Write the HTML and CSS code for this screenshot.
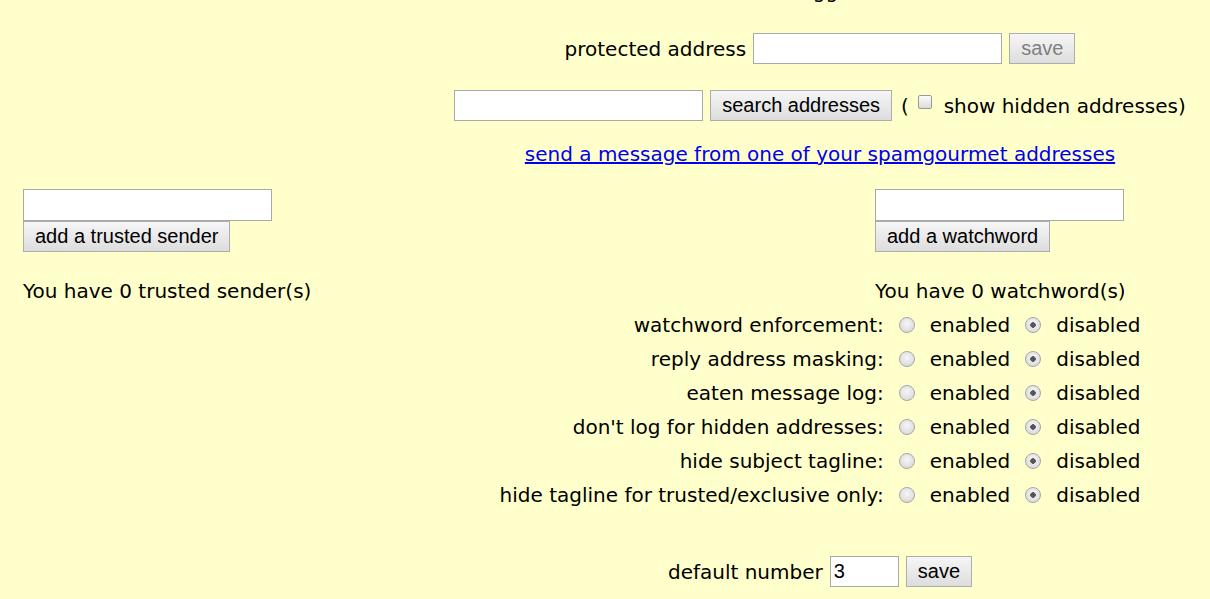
FILE: index.html
```html
<!DOCTYPE html>
<html lang="en">
<head>
  <meta charset="UTF-8" />
  <title>spamgourmet</title>
  <link rel="stylesheet" href="styles.css">
</head>
<body>
  <div class="panel">
    <p class="greeting">logged</p>

    <form class="row">
      <label for="protected">protected address</label>
      <input type="text" id="protected" class="field">
      <button type="button" disabled>save</button>
    </form>

    <form class="row search">
      <input type="text" class="field">
      <button type="button">search addresses</button>
      <span class="hidden-opt">( <input type="checkbox" class="check"> show hidden addresses)</span>
    </form>

    <p class="send"><a href="#">send a message from one of your spamgourmet addresses</a></p>
  </div>

  <div class="lists">
    <div class="list">
      <input type="text" class="field">
      <button type="button">add a trusted sender</button>
      <p class="count">You have 0 trusted sender(s)</p>
    </div>
    <div class="list">
      <input type="text" class="field">
      <button type="button">add a watchword</button>
      <p class="count">You have 0 watchword(s)</p>
    </div>
  </div>

  <div class="panel">
    <table class="prefs">
      <tr>
        <td class="name">watchword enforcement:</td>
        <td><div class="opts"><input type="radio" name="p1" class="radio">enabled<input type="radio" name="p1" class="radio" checked>disabled</div></td>
      </tr>
      <tr>
        <td class="name">reply address masking:</td>
        <td><div class="opts"><input type="radio" name="p2" class="radio">enabled<input type="radio" name="p2" class="radio" checked>disabled</div></td>
      </tr>
      <tr>
        <td class="name">eaten message log:</td>
        <td><div class="opts"><input type="radio" name="p3" class="radio">enabled<input type="radio" name="p3" class="radio" checked>disabled</div></td>
      </tr>
      <tr>
        <td class="name">don't log for hidden addresses:</td>
        <td><div class="opts"><input type="radio" name="p4" class="radio">enabled<input type="radio" name="p4" class="radio" checked>disabled</div></td>
      </tr>
      <tr>
        <td class="name">hide subject tagline:</td>
        <td><div class="opts"><input type="radio" name="p5" class="radio">enabled<input type="radio" name="p5" class="radio" checked>disabled</div></td>
      </tr>
      <tr>
        <td class="name">hide tagline for trusted/exclusive only:</td>
        <td><div class="opts"><input type="radio" name="p6" class="radio">enabled<input type="radio" name="p6" class="radio" checked>disabled</div></td>
      </tr>
    </table>

    <form class="row default">
      <label for="defnum">default number</label>
      <input type="text" id="defnum" class="field small" value="3">
      <button type="button">save</button>
    </form>
  </div>
</body>
</html>
```

FILE: styles.css
```css
body {
  margin: 0;
  background: #ffffcc;
  color: #000;
  font-family: "DejaVu Sans", Verdana, sans-serif;
  font-size: 20px;
}

p {
  margin: 0;
}

.panel {
  margin-left: 430px;
  width: 780px;
  text-align: center;
}

.greeting {
  margin-top: -21px;
  padding-left: 18px;
  line-height: 24px;
}

.row {
  display: flex;
  align-items: center;
  justify-content: center;
  gap: 7px;
  margin: 30px 0 0;
}

.row.search {
  margin-top: 26px;
}

.hidden-opt {
  margin-left: 2px;
}

.field {
  box-sizing: border-box;
  width: 249px;
  height: 31px;
  padding: 1px 3px;
  border: 1px solid #a9a9a9;
  background: #fff;
  font-family: "Liberation Sans", Arial, sans-serif;
  font-size: 20px;
  color: #000;
}

.field.small {
  width: 69px;
}

button {
  box-sizing: border-box;
  height: 31px;
  padding: 0 11px;
  border: 1px solid #adadad;
  border-radius: 0;
  background: linear-gradient(#f6f6f6, #dddddd);
  font-family: "Liberation Sans", Arial, sans-serif;
  font-size: 20px;
  color: #000;
}

button:disabled {
  color: #7f7f7f;
}

.check {
  appearance: none;
  box-sizing: border-box;
  width: 14px;
  height: 14px;
  margin: 0 5px 0 3px;
  vertical-align: 4px;
  border: 1px solid #9a9a9a;
  border-radius: 2px;
  background: linear-gradient(#fcfcfc, #dcdcdc);
}

.send {
  margin-top: 21px;
}

.send a {
  color: #0000ee;
}

.lists {
  display: grid;
  grid-template-columns: 852px auto;
  padding-left: 23px;
  margin-top: 23px;
}

.list {
  display: flex;
  flex-direction: column;
  align-items: flex-start;
}

.list .field {
  height: 32px;
}

.count {
  margin-top: 27px;
}

.prefs {
  margin: 5px auto 0;
  border-spacing: 0;
}

.prefs td {
  height: 34px;
  padding: 0;
}

.prefs .name {
  text-align: right;
}

.opts {
  display: flex;
  align-items: center;
}

.radio {
  appearance: none;
  flex-shrink: 0;
  box-sizing: border-box;
  width: 16px;
  height: 16px;
  margin: 0 15px 0 15px;
  border: 1px solid #a6a6a6;
  border-radius: 50%;
  background: radial-gradient(circle at 50% 40%, #f6f6f6, #d4d4d4);
}

.radio:checked {
  background: radial-gradient(circle, #555 0 2.5px, transparent 3px), radial-gradient(circle at 50% 40%, #f6f6f6, #d4d4d4);
}

.row.default {
  margin-top: 44px;
}
```
